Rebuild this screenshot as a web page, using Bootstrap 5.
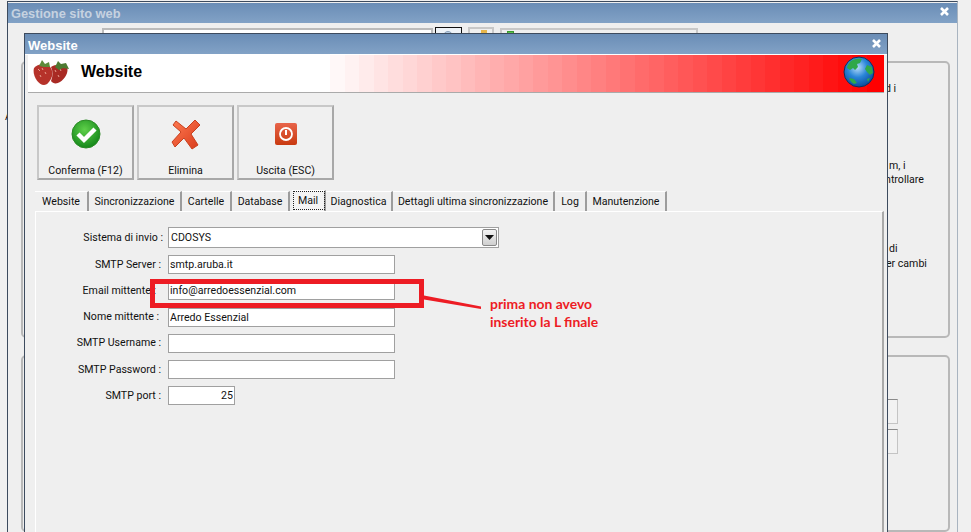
<!DOCTYPE html>
<html lang="it">
<head>
<meta charset="UTF-8">
<title>Gestione sito web</title>
<link rel="stylesheet" href="https://cdn.jsdelivr.net/npm/bootstrap@5.3.0/dist/css/bootstrap.min.css">
<style>
  html, body { margin: 0; height: 532px; overflow: hidden; }
  body { background: #f0f0f0; font-family: Roboto, "Liberation Sans", sans-serif; font-size: 10.600px; line-height: 14px; color: #111; position: relative; }
  .win { position: absolute; background: #efefef; border: 1px solid #3d4b5e; border-bottom: 0; }
  .win-outer { left: 7px; top: 1px; width: 951px; height: 540px; border-right-color: #a9b4c0; }
  .win-inner { left: 24px; top: 33px; width: 864px; height: 510px; display: flex; flex-direction: column; }
  .win-title { height: 20px; background: linear-gradient(#6a8db6, #82a2c6); font-weight: 700; padding: 0 3px; flex: none; display: flex; align-items: center; justify-content: space-between; font-family: "Liberation Sans", sans-serif; }
  .win-outer .win-title { color: #c6d2e0; margin-top: 1px; font-size: 12.800px; padding: 2px 7px 0 3px; }
  .win-inner .win-title { color: #fff; border-bottom: 1px solid #fff; height: 21px; font-size: 13px; padding: 4px 5px 0 3px; }
  .close-x { width: 11px; height: 11px; display: block; margin-top: -5px; }
  .banner { height: 38px; margin: 0 3px; border-bottom: 1px solid #aaa; flex: none; padding: 0 9px 3px 5px; background: #fff; }
  .banner-title { font-family: "Liberation Sans", sans-serif; font-weight: 700; font-size: 16px; color: #000; margin-left: 11px; }
  .tool-row { padding: 12px 0 0 12px; gap: 3px; flex: none; }
  .tool-btn { width: 97px; height: 75px; padding: 0; border-radius: 0; border: 2px solid #c8c8c8; border-right-color: #a8a8a8; border-bottom-color: #a8a8a8; background: #f0f0f0; font-size: 10.600px; line-height: 14px; color: #111; display: flex; flex-direction: column; align-items: center; }
  .tool-ico { height: 32px; margin-top: 11px; margin-bottom: 14px; }
  .tab-strip { margin: 11px 0 0 10px; height: 20px; flex: none; }
  .tab-item { border-right: 2px solid #9c9c9c; border-top: 1px solid #fff; text-align: center; padding-top: 3px; color: #111; white-space: nowrap; text-decoration: none; }
  .t1 { width: 54px; } .t2 { width: 93px; } .t3 { width: 50px; } .t4 { width: 58px; } .t5 { width: 36px; } .t6 { width: 67px; } .t7 { width: 162px; } .t8 { width: 32px; } .t9 { width: 80px; }
  .tab-on { outline: 1px dotted #222; outline-offset: -2px; background: #f4f4f4; margin-top: -1px; height: 21px; margin-left: 2px; width: 34px; }
  .tab-body { margin-left: 10px; margin-right: 3px; border-left: 1px solid #fff; border-top: 1px solid #fff; border-right: 2px solid #a9a9a9; flex: 1; padding-top: 15px; }
  .frm-row { display: flex; align-items: center; height: 19px; margin-bottom: 7.300px; }
  .frm-lab { width: 125px; text-align: right; flex: none; margin-right: 7px; white-space: nowrap; }
  .lab-mail { width: 120px; margin-right: 12px; }
  .lab-nome { width: 123px; margin-right: 9px; }
  .lab-sis { width: 127px; margin-right: 5px; }
  .frm-ctl { width: 227px; height: 19px; border: 1px solid #a0a0a0; border-radius: 0; padding: 0 1px; font-size: 10.600px; line-height: 14px; color: #111; background: #fff; font-family: inherit; }
  .frm-ctl:focus { box-shadow: none; border-color: #a0a0a0; }
  .frm-port { width: 67px; text-align: right; }
  .combo { width: 331px; height: 21px; border: 1px solid #a0a0a0; background: #fff; padding-left: 2px; }
  .combo-btn { width: 15px; height: 17px; margin-right: 1px; border: 1px solid #888; border-radius: 2px; background: linear-gradient(#f4f4f4, #cfcfcf); }
  .first-row { height: 21px; margin-bottom: 7px; }
  .grp { position: absolute; left: 13px; width: 929px; border: 2px solid #b8b8b8; border-radius: 5px; }
  .grp-a { top: 59px; height: 277px; }
  .grp-b { top: 353px; height: 177px; }
  .bg-txt { position: absolute; white-space: nowrap; }
  .bg-a { left: 5px; top: 110px; }
  .bg-box { position: absolute; border: 2px solid #c8c8c8; border-bottom: 0; }
  .bg-fld { left: 94px; top: 26px; width: 331px; height: 10px; border-color: #bbb; background: #fff; }
  .bg-b1 { left: 427px; top: 25px; width: 27px; height: 10px; border: 1px solid #111; border-bottom: 0; background: #eef3f8; }
  .bg-b2 { left: 460px; top: 25px; width: 26px; height: 10px; }
  .bg-b3 { left: 492px; top: 26px; width: 198px; height: 10px; }
  .bg-green { position: absolute; left: 499px; top: 29px; width: 7px; height: 6px; background: #5cc04a; border: 1px solid #3a9a30; }
  .bg-orange { position: absolute; left: 473px; top: 28px; width: 6px; height: 6px; background: #e8b64a; }
  .bg-lens { position: absolute; left: 435px; top: 29px; width: 10px; height: 10px; border-radius: 50%; background: #b9cfe6; border: 1px solid #8aa0b8; }
  .bg-fld2 { position: absolute; left: 860px; width: 30px; height: 25px; border: 1px solid #c4c4c4; border-top-color: #8a8a8a; background: #f2f2f2; }
  .f-a { top: 397px; } .f-b { top: 427px; }
  .mark-box { position: absolute; left: 150px; top: 279px; width: 274px; height: 29px; border: 5px solid #ed1c24; }
  .mark-line { position: absolute; left: 420px; top: 290px; }
  .mark-note { position: absolute; left: 490px; top: 295px; font-family: Lato, sans-serif; font-weight: 700; font-size: 13.900px; line-height: 18px; color: #ed1c24; }
</style>
</head>
<body>

<span class="bg-txt bg-a">A</span>

<div class="win win-outer">
  <div class="win-title">
    <span>Gestione sito web</span>
    <svg class="close-x" viewBox="0 0 11 11"><path d="M2 2l7 7M9 2l-7 7" stroke="#fff" stroke-width="2.6"/></svg>
  </div>
  <div class="bg-box bg-fld"></div>
  <div class="bg-box bg-b1"></div>
  <div class="bg-lens"></div>
  <div class="bg-box bg-b2"></div>
  <div class="bg-orange"></div>
  <div class="bg-box bg-b3"></div>
  <div class="bg-green"></div>
  <div class="grp grp-a"></div>
  <div class="grp grp-b"></div>
  <span class="bg-txt" style="left:877px;top:80px">d i</span>
  <span class="bg-txt" style="left:881px;top:157px">m, i</span>
  <span class="bg-txt" style="left:871px;top:171px">ontrollare</span>
  <span class="bg-txt" style="left:881px;top:240px">di</span>
  <span class="bg-txt" style="left:872px;top:255px">per cambi</span>
  <div class="bg-fld2 f-a"></div>
  <div class="bg-fld2 f-b"></div>
</div>

<div class="win win-inner">
  <div class="win-title">
    <span>Website</span>
    <svg class="close-x" viewBox="0 0 11 11"><path d="M2 2l7 7M9 2l-7 7" stroke="#fff" stroke-width="2.6"/></svg>
  </div>
  <div class="banner d-flex align-items-center" id="banner">
    <svg width="37" height="26" viewBox="0 0 37 26">
      <path d="M1 9c3-4 10-5 15-2 4 3 4 9 2 13-2 3-4 6-7 6C5 26-1 16 1 9z" fill="#b6322a"/>
      <path d="M18 8c4-3 12-3 16 0 2 5-2 12-7 15-3 2-7 2-9-1 2-5 2-10 0-14z" fill="#a92a24"/>
      <path d="M5 10l2 2M9 9l1 2M12 13l1 2M7 16l1 2M22 11l1 2M27 10l1 2M25 16l1 2" stroke="#e8a090" stroke-width="1"/>
      <path d="M6 7l3-6 3 4 4-2 1 5-6 0z" fill="#5c8a3a"/>
      <path d="M22 8l3-6 3 3 5-1 3 6-6-1-4 2z" fill="#4d7a32"/>
    </svg>
    <span class="banner-title">Website</span>
    <svg class="ms-auto" width="32" height="32" viewBox="0 0 32 32">
      <defs><radialGradient id="gl" cx="45%" cy="35%" r="65%"><stop offset="0" stop-color="#b8dcf8"/><stop offset=".5" stop-color="#2a86d8"/><stop offset="1" stop-color="#0c4c9c"/></radialGradient></defs>
      <circle cx="16" cy="16" r="15" fill="url(#gl)" stroke="#12305a" stroke-width="1"/>
      <path d="M8 5c3-2 8-3 11-2l-2 4-3 1 1 3-3 3-2-2-3 2-3-2c0-3 2-5 4-7z" fill="#2fa84a"/>
      <path d="M24 9l5 2 1 6-3 2-3-3-2-3z" fill="#2fa84a"/>
      <path d="M6 22l5 1 3 4-3 1c-2-1-4-3-5-6z" fill="#2fa84a"/>
      <path d="M24 23l3-1-2 4z" fill="#2fa84a"/>
    </svg>
  </div>

  <div class="tool-row d-flex">
    <button type="button" class="btn tool-btn">
      <svg class="tool-ico" width="30" height="32" viewBox="0 0 30 32">
        <defs><radialGradient id="gc" cx="45%" cy="35%" r="70%"><stop offset="0" stop-color="#5fd04a"/><stop offset="1" stop-color="#0e8216"/></radialGradient></defs>
        <circle cx="15" cy="16" r="14" fill="url(#gc)" stroke="#2a8a24"/>
        <path d="M7 16l6 6L24 11" fill="none" stroke="#fff" stroke-width="4.400"/>
      </svg>
      Conferma (F12)
    </button>
    <button type="button" class="btn tool-btn">
      <svg class="tool-ico" width="30" height="32" viewBox="0 0 30 32">
        <defs><linearGradient id="gx" x1="0" y1="0" x2="1" y2="1"><stop offset="0" stop-color="#ff7b52"/><stop offset="1" stop-color="#d83a1a"/></linearGradient></defs>
        <path d="M5 3l10 8 9-9 5 5-9 9 7 11-6 4-8-11-9 9-3-5 9-10L2 7z" fill="url(#gx)" stroke="#c8401e" stroke-linejoin="round"/>
      </svg>
      Elimina
    </button>
    <button type="button" class="btn tool-btn">
      <svg class="tool-ico" width="24" height="32" viewBox="0 0 24 32">
        <defs><linearGradient id="gp" x1="0" y1="0" x2="0" y2="1"><stop offset="0" stop-color="#e8644a"/><stop offset="1" stop-color="#c93a10"/></linearGradient></defs>
        <rect x="1" y="5" width="22" height="22" rx="2" fill="url(#gp)"/>
        <circle cx="12" cy="16" r="6" fill="none" stroke="#fff" stroke-width="1.800"/>
        <path d="M12 12v5" stroke="#fff" stroke-width="2"/>
      </svg>
      Uscita (ESC)
    </button>
  </div>

  <nav class="tab-strip d-flex">
    <a class="tab-item t1">Website</a>
    <a class="tab-item t2">Sincronizzazione</a>
    <a class="tab-item t3">Cartelle</a>
    <a class="tab-item t4">Database</a>
    <a class="tab-item t5 tab-on">Mail</a>
    <a class="tab-item t6">Diagnostica</a>
    <a class="tab-item t7">Dettagli ultima sincronizzazione</a>
    <a class="tab-item t8">Log</a>
    <a class="tab-item t9">Manutenzione</a>
  </nav>

  <div class="tab-body">
    <div class="frm-row first-row">
      <span class="frm-lab lab-sis">Sistema di invio :</span>
      <div class="combo d-flex align-items-center justify-content-between">
        <span>CDOSYS</span>
        <span class="combo-btn d-flex align-items-center justify-content-center">
          <svg width="9" height="5" viewBox="0 0 9 5"><path d="M0 0h9L4.500 5z" fill="#111"/></svg>
        </span>
      </div>
    </div>
    <div class="frm-row"><span class="frm-lab">SMTP Server :</span><input class="form-control frm-ctl" value="smtp.aruba.it"></div>
    <div class="frm-row"><span class="frm-lab lab-mail">Email mittente :</span><input class="form-control frm-ctl" value="info@arredoessenzial.com"></div>
    <div class="frm-row"><span class="frm-lab lab-nome">Nome mittente :</span><input class="form-control frm-ctl" value="Arredo Essenzial"></div>
    <div class="frm-row"><span class="frm-lab">SMTP Username :</span><input class="form-control frm-ctl"></div>
    <div class="frm-row"><span class="frm-lab">SMTP Password :</span><input class="form-control frm-ctl"></div>
    <div class="frm-row"><span class="frm-lab">SMTP port :</span><input class="form-control frm-ctl frm-port" value="25"></div>
  </div>
</div>

<div class="mark-box"></div>
<svg class="mark-line" width="66" height="24" viewBox="0 0 66 24"><path d="M4 5.500L61 16.500 61 19 4 9.500z" fill="#ed1c24"/></svg>
<div class="mark-note">prima non avevo<br>inserito la L finale</div>

<script src="https://cdn.jsdelivr.net/npm/bootstrap@5.3.0/dist/js/bootstrap.bundle.min.js"></script>
<script>
  // bande del gradiente, come nell'originale
  const stops = ['#fff 0', '#fff 302px'];
  for (let i = 0; i < 38; i++) {
    const g = Math.round(255 * (1 - (i + 1) / 38));
    stops.push(`rgb(255,${g},${g}) ${302 + i * 14.5}px`, `rgb(255,${g},${g}) ${302 + (i + 1) * 14.5}px`);
  }
  document.getElementById('banner').style.background = `linear-gradient(90deg, ${stops.join(',')})`;
</script>
</body>
</html>
